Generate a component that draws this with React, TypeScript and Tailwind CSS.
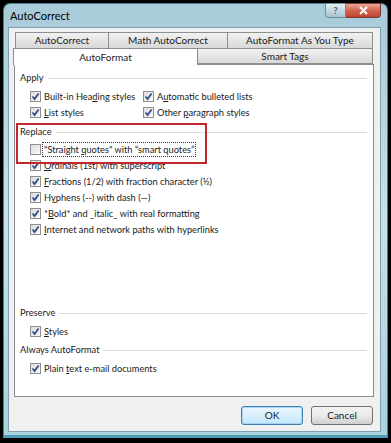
import React from 'react';

const font = {fontFamily: 'Lato, "Open Sans", "Noto Sans", sans-serif'};

const Check: React.FC<{checked?: boolean}> = ({checked = true}) => (
    <span
        className="w-[11px] h-[11px] shrink-0 border border-[#8e8f8f] bg-gradient-to-br from-[#dcdcdc] to-[#fbfbfb] flex items-center justify-center">
        {checked && (
            <svg width="9" height="9" viewBox="0 0 9 9">
                <path d="M1.5 4.5 L3.6 7 L7.6 1.5" fill="none" stroke="#2b4a83" strokeWidth="1.7"/>
            </svg>
        )}
    </span>
);

const Row: React.FC<{children: React.ReactNode; checked?: boolean; className?: string; focus?: boolean}> = ({
    children,
    checked = true,
    className = '',
    focus = false,
}) => (
    <div className={`h-[16px] flex items-center gap-[1px] whitespace-nowrap ${className}`}>
        <Check checked={checked}/>
        <span className={`leading-[13px] px-[1px] ${focus ? 'border border-dotted border-[#333]' : 'border border-transparent'}`}>
            {children}
        </span>
    </div>
);

const Group: React.FC<{label: string; className?: string}> = ({label, className = ''}) => (
    <div className={`h-[16px] flex items-center gap-[4px] ${className}`}>
        <span>{label}</span>
        <span className="flex-1 h-px bg-[#dcdcdc] mr-[5px]"></span>
    </div>
);

const u = (s: string) => <span className="underline underline-offset-1">{s}</span>;

export default function App() {
    return (
        <div className="w-[391px] h-[443px] bg-black px-[3px] pt-[3px] relative text-[9.25px] text-[#1a1a1a]" style={font}>
            <div
                className="h-[435px] rounded-t-[7px] border border-[#4d7f93] border-b-[3px] border-b-[#4f9bb5] bg-gradient-to-b from-[#a8cbd9] via-[#c6e1ea] to-[#a6d2e0] flex flex-col">
                {/* title bar */}
                <div className="h-[23px] flex items-start justify-between pl-[6px] pr-[6px]">
                    <span className="text-[11px] text-black mt-[4px]">AutoCorrect</span>
                    <div className="flex -mt-px">
                        <div
                            className="w-[21px] h-[15px] rounded-bl-[4px] border border-[#6d8d9a] bg-gradient-to-b from-[#e3eff4] to-[#a9c3cf] flex items-center justify-center text-[10px] font-bold text-[#4a6a78]">?
                        </div>
                        <div
                            className="w-[35px] h-[15px] rounded-br-[4px] border border-l-0 border-[#7a3a33] bg-gradient-to-b from-[#e9a99c] via-[#d0644f] to-[#c1432e] flex items-center justify-center">
                            <svg width="11" height="9" viewBox="0 0 11 9">
                                <path d="M2 1 L9 8 M9 1 L2 8" stroke="white" strokeWidth="2"/>
                            </svg>
                        </div>
                    </div>
                </div>
                {/* content */}
                <div
                    className="flex-1 ml-[4px] mr-[6px] mb-[3px] border border-[#7f9fac] bg-[#f0f0f0] pl-[5px] pr-[6px] pt-[4px] flex flex-col">
                    {/* tabs */}
                    <div className="flex h-[16px] pl-[1px] pr-[1px] text-[10px]">
                        <div
                            className="w-[94px] border border-b-0 border-[#8e8f8f] bg-gradient-to-b from-[#f2f2f2] to-[#d8d8d8] flex items-center justify-center">AutoCorrect
                        </div>
                        <div
                            className="w-[119px] border border-l-0 border-b-0 border-[#8e8f8f] bg-gradient-to-b from-[#f2f2f2] to-[#d8d8d8] flex items-center justify-center">Math
                            AutoCorrect
                        </div>
                        <div
                            className="flex-1 border border-l-0 border-b-0 border-[#8e8f8f] bg-gradient-to-b from-[#f2f2f2] to-[#d8d8d8] flex items-center justify-center">AutoFormat
                            As You Type
                        </div>
                    </div>
                    <div className="flex h-[16px] -ml-[1px] relative z-10 text-[10px]">
                        <div
                            className="w-[185px] border border-b-0 border-[#898c95] bg-white flex items-center justify-center h-[17px]">AutoFormat
                        </div>
                        <div
                            className="flex-1 mr-[1px] border border-l-0 border-[#8e8f8f] bg-gradient-to-b from-[#f2f2f2] to-[#d8d8d8] flex items-center justify-center">Smart
                            Tags
                        </div>
                    </div>
                    {/* panel */}
                    <div className="h-[333px] border border-[#898c95] bg-white pt-[5px] pl-[5px] pr-[1px]">
                        <Group label="Apply"/>
                        <div className="pl-[10px]">
                            <div className="grid grid-cols-[113px_1fr] mt-[2px]">
                                <Row>Built-in Hea{u('d')}ing styles</Row>
                                <Row>A{u('u')}tomatic bulleted lists</Row>
                                <Row>{u('L')}ist styles</Row>
                                <Row>Other {u('p')}aragraph styles</Row>
                            </div>
                        </div>
                        <Group label="Replace" className="mt-[4px]"/>
                        <div className="pl-[10px]">
                            <Row checked={false} focus className="mt-px">"Straight {u('q')}uotes" with “smart quotes”</Row>
                            <Row>{u('O')}rdinals (1st) with superscript</Row>
                            <Row>{u('F')}ractions (1/2) with fraction character (½)</Row>
                            <Row>H{u('y')}phens (--) with dash (—)</Row>
                            <Row>*{u('B')}old* and _italic_ with real formatting</Row>
                            <Row>{u('I')}nternet and network paths with hyperlinks</Row>
                        </div>
                        <Group label="Preserve" className="mt-[68px]"/>
                        <div className="pl-[10px]">
                            <Row className="mt-[2px]">{u('S')}tyles</Row>
                        </div>
                        <Group label="Always AutoFormat" className="mt-[3px]"/>
                        <div className="pl-[10px]">
                            <Row className="mt-[2px]">Plain {u('t')}ext e-mail documents</Row>
                        </div>
                    </div>
                    {/* buttons */}
                    <div className="flex justify-end gap-[8px] mt-[9px] pr-[1px]">
                        <button
                            className="w-[62px] h-[19px] rounded-[3px] border border-[#3c7fb1] bg-gradient-to-b from-[#eaf6fd] via-[#d9f0fc] to-[#bee6fd] shadow-[inset_0_0_0_1px_#a6d6f3] text-[10px]">OK
                        </button>
                        <button
                            className="w-[62px] h-[19px] rounded-[3px] border border-[#707070] bg-gradient-to-b from-[#f2f2f2] via-[#ebebeb] to-[#cfcfcf] text-[10px]">Cancel
                        </button>
                    </div>
                </div>
            </div>
            {/* annotation */}
            <div className="absolute left-[16px] top-[123px] w-[191px] h-[41px] border-2 border-[#c1272d]"></div>
        </div>
    );
}
